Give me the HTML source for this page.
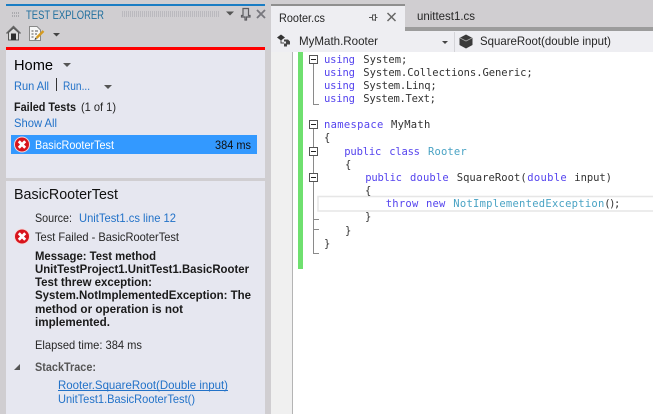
<!DOCTYPE html>
<html><head><meta charset="utf-8"><title>Test Explorer</title>
<style>
html,body{margin:0;padding:0;background:#d0ced1}
svg{display:block}
text{font-family:"Liberation Sans",sans-serif;font-size:12px;fill:#262626}
.b{font-weight:bold;fill:#1a1a1a}
.l{fill:#2272c8}
.m{font-family:"DejaVu Sans Mono",monospace;font-size:10.5px;fill:#333}
.k{fill:#5544ee}.t{fill:#4aa3c4}
</style></head><body>
<svg width="653" height="414" viewBox="0 0 653 414" xmlns="http://www.w3.org/2000/svg">
<defs>
<g id="err"><circle r="8" fill="#f6d9d9"/><circle r="7" fill="#d8141c"/><path d="M-3.200-3.200L3.200 3.200M3.200-3.200L-3.200 3.200" stroke="#fff" stroke-width="2.800"/></g>
<g id="box"><rect x=".5" y=".5" width="8" height="8" fill="#fff" stroke="#555"/><path d="M2 4.500H7" stroke="#222"/></g>
</defs>
<rect width="653" height="414" fill="#d0ced1"/>
<!-- left panel header -->
<rect x="6" y="4" width="259" height="2" fill="#1a7dc4"/>
<path d="M12 13h7M12 16h7" stroke="#85858c" stroke-dasharray="1 1"/>
<text x="26" y="19" textLength="78" lengthAdjust="spacingAndGlyphs" style="font-size:12px;fill:#1f6f9e">TEST EXPLORER</text>
<path d="M122 12H220M122 14H220M122 16H220" stroke="#a4a4aa" stroke-dasharray="1 1"/>
<path d="M226 11.500h8l-4 4z" fill="#555"/>
<path d="M243 8.500h5.500v7h1.500v1.500h-3.500v3h-1.500v-3h-3.500v-1.500h1.500z" fill="#c8c8cc" stroke="#5c5c60" stroke-width="1.200"/>
<path d="M257 10l8 8M265 10l-8 8" stroke="#77777d" stroke-width="1.800"/>
<!-- home icon -->
<path d="M6.500 33.500L13.500 26.500L20.500 33.500" fill="none" stroke="#666" stroke-width="1.500"/>
<path d="M8.500 32.500V40H18.500V32.500L13.500 28z" fill="#dcdcdc" stroke="#555"/>
<rect x="11" y="33.500" width="5" height="6.500" fill="#2e2e2e"/>
<!-- playlist icon -->
<path d="M29.500 26.500H37L40.500 30V40.500H29.500z" fill="#f7f7f7" stroke="#888"/>
<path d="M31.500 31h2M31.500 34h2M31.500 37h2M35 31h3M35 34h2" stroke="#555"/>
<path d="M36.500 38L43.500 31" stroke="#d59a20" stroke-width="2.400"/>
<path d="M34.500 40l1-2.500 1.500 1.500z" fill="#333"/>
<path d="M53 33h7l-3.500 3.500z" fill="#444"/>
<!-- top panel -->
<rect x="6" y="50" width="259" height="128" fill="#e6e7f0"/>
<rect x="6" y="47" width="259" height="3" fill="#ff0000"/>
<text x="14" y="70" textLength="39" lengthAdjust="spacingAndGlyphs" style="font-size:15px;fill:#000">Home</text>
<path d="M63 63h8l-4 4z" fill="#555"/>
<text class="l" x="14" y="90" textLength="35" lengthAdjust="spacingAndGlyphs">Run All</text>
<rect x="56" y="78" width="1" height="13" fill="#333"/>
<text class="l" x="63" y="90" textLength="27" lengthAdjust="spacingAndGlyphs">Run...</text>
<path d="M104 85h8l-4 4z" fill="#555"/>
<text class="b" x="14" y="111" textLength="62" lengthAdjust="spacingAndGlyphs">Failed Tests</text>
<text x="81" y="111" textLength="35" lengthAdjust="spacingAndGlyphs">(1 of 1)</text>
<text class="l" x="14" y="127" textLength="43" lengthAdjust="spacingAndGlyphs">Show All</text>
<rect x="11" y="135" width="246" height="19" fill="#3399ff"/>
<use href="#err" x="22" y="144.500"/>
<text x="35" y="149" textLength="79" lengthAdjust="spacingAndGlyphs" style="fill:#fff">BasicRooterTest</text>
<text x="215" y="149" textLength="36" lengthAdjust="spacingAndGlyphs" style="fill:#111">384 ms</text>
<!-- bottom panel -->
<rect x="6" y="181" width="259" height="233" fill="#e6e7f0"/>
<text x="14" y="199" textLength="104" lengthAdjust="spacingAndGlyphs" style="font-size:15px;fill:#111">BasicRooterTest</text>
<text x="35" y="222" textLength="37" lengthAdjust="spacingAndGlyphs">Source:</text>
<text class="l" x="79" y="222" textLength="97" lengthAdjust="spacingAndGlyphs">UnitTest1.cs line 12</text>
<use href="#err" x="22" y="236.500"/>
<text x="35" y="241" textLength="144" lengthAdjust="spacingAndGlyphs">Test Failed - BasicRooterTest</text>
<text class="b" x="35" y="260" textLength="121" lengthAdjust="spacingAndGlyphs">Message: Test method</text>
<text class="b" x="35" y="273" textLength="214" lengthAdjust="spacingAndGlyphs">UnitTestProject1.UnitTest1.BasicRooter</text>
<text class="b" x="35" y="286" textLength="117" lengthAdjust="spacingAndGlyphs">Test threw exception:</text>
<text class="b" x="35" y="299" textLength="216" lengthAdjust="spacingAndGlyphs">System.NotImplementedException: The</text>
<text class="b" x="35" y="313" textLength="148" lengthAdjust="spacingAndGlyphs">method or operation is not</text>
<text class="b" x="35" y="326" textLength="75" lengthAdjust="spacingAndGlyphs">implemented.</text>
<text x="35" y="349" textLength="107" lengthAdjust="spacingAndGlyphs">Elapsed time: 384 ms</text>
<path d="M14 370h6v-6z" fill="#555"/>
<text class="b" x="35" y="371" textLength="61" lengthAdjust="spacingAndGlyphs" style="fill:#555">StackTrace:</text>
<text class="l" x="58" y="389" textLength="170" lengthAdjust="spacingAndGlyphs">Rooter.SquareRoot(Double input)</text>
<rect x="58" y="390" width="170" height="1" fill="#2272c8"/>
<text class="l" x="58" y="403" textLength="137" lengthAdjust="spacingAndGlyphs">UnitTest1.BasicRooterTest()</text>
<!-- right: tabs -->
<rect x="271" y="4" width="134" height="2" fill="#8f8f8f"/>
<rect x="271" y="6" width="134" height="26" fill="#eeeef2"/>
<rect x="405" y="27" width="248" height="4" fill="#9c9c9c"/>
<text x="279" y="22" textLength="46" lengthAdjust="spacingAndGlyphs">Rooter.cs</text>
<path d="M369 17.500h3M372.500 15v5h3v-5zM375.500 14v7M375.500 17.500h2" fill="none" stroke="#555"/>
<path d="M387.500 13l8 8M395.500 13l-8 8" stroke="#666" stroke-width="1.500"/>
<text x="417" y="20" textLength="58" lengthAdjust="spacingAndGlyphs">unittest1.cs</text>
<!-- nav bar -->
<rect x="271" y="31" width="382" height="21" fill="#eeeef2"/>
<rect x="454" y="32" width="1" height="20" fill="#d4d4d8"/>
<path d="M277 37.500l4-3 4 3-4 3z" fill="#333"/>
<path d="M284 39.500h4l2 2v3h-3v2h-3v-3h2v-2h-2z" fill="#444"/>
<path d="M281 40v3h3" fill="none" stroke="#444"/>
<text x="299" y="45" textLength="79" lengthAdjust="spacingAndGlyphs">MyMath.Rooter</text>
<path d="M442 41h6l-3 3z" fill="#444"/>
<path d="M466 34.500l6.500 3.500v7l-6.500 3.500-6.500-3.500v-7z" fill="#3a3a3a"/>
<path d="M460 38l6 3 6-3" fill="none" stroke="#aaa" stroke-width=".8"/>
<text x="480" y="45" textLength="131" lengthAdjust="spacingAndGlyphs">SquareRoot(double input)</text>
<!-- editor -->
<rect x="271" y="52" width="382" height="362" fill="#fff"/>
<rect x="271" y="52" width="21" height="362" fill="#f0f0f0"/>
<rect x="292" y="52" width="1" height="362" fill="#b4b4b4"/>
<rect x="298" y="52" width="5" height="217" fill="#6fe06f"/>
<rect x="318" y="196.500" width="336" height="14.500" fill="#fff" stroke="#e6e6e6" stroke-width="1.500"/>
<g fill="none" stroke="#8a8a8a">
<path d="M313.500 63V104.500H319"/>
<path d="M313.500 129V253.500H319M313.500 219.500H319M313.500 229.500H319"/>
</g>
<use href="#box" x="309" y="55"/>
<use href="#box" x="309" y="120"/>
<use href="#box" x="309" y="147"/>
<use href="#box" x="309" y="173"/>
<text class="m k" x="324" y="63" textLength="31">using</text><text class="m" x="363.300" y="63" textLength="44">System;</text>
<text class="m k" x="324" y="76" textLength="31">using</text><text class="m" x="363.300" y="76" textLength="169.400">System.Collections.Generic;</text>
<text class="m k" x="324" y="89" textLength="31">using</text><text class="m" x="363.300" y="89" textLength="73.400">System.Linq;</text>
<text class="m k" x="324" y="102" textLength="31">using</text><text class="m" x="363.300" y="102" textLength="72.700">System.Text;</text>
<text class="m k" x="324" y="128" textLength="59.300">namespace</text><text class="m" x="391" y="128" textLength="39.300">MyMath</text>
<text class="m" x="324" y="141">{</text>
<text class="m k" x="344.300" y="155" textLength="37">public</text><text class="m k" x="389.300" y="155" textLength="30.700">class</text><text class="m t" x="428" y="155" textLength="38.700">Rooter</text>
<text class="m" x="345" y="168">{</text>
<text class="m k" x="365.300" y="181" textLength="36.700">public</text><text class="m k" x="410" y="181" textLength="38.700">double</text><text class="m" x="456.700" y="181" textLength="70">SquareRoot(</text><text class="m k" x="527.300" y="181" textLength="39.400">double</text><text class="m" x="574.300" y="181" textLength="37.700">input)</text>
<text class="m" x="365" y="194">{</text>
<text class="m k" x="385.700" y="207" textLength="32.600">throw</text><text class="m k" x="426" y="207" textLength="19.300">new</text><text class="m t" x="453.300" y="207" textLength="151">NotImplementedException</text><text class="m" x="604.300" y="207" textLength="16">();</text>
<text class="m" x="365" y="220">}</text>
<text class="m" x="345" y="234">}</text>
<text class="m" x="324" y="247">}</text>
</svg>
</body></html>
